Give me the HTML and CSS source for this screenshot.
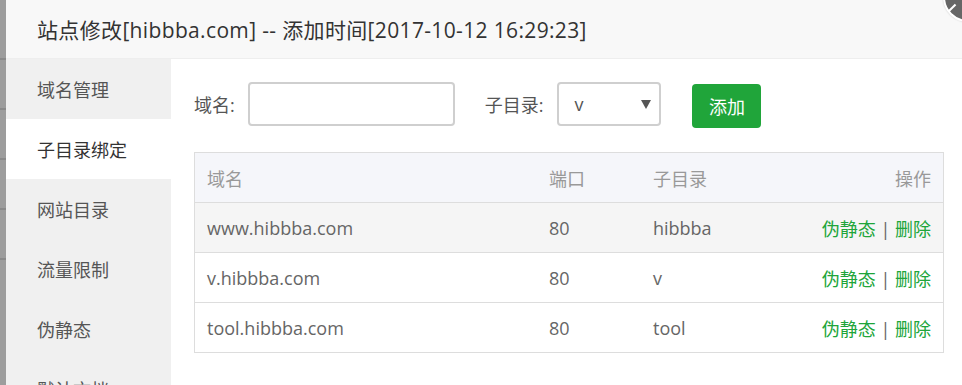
FILE: index.html
```html
<!DOCTYPE html>
<html lang="zh-CN">
<head>
    <meta charset="UTF-8">
    <title>站点修改</title>
    <link rel="stylesheet" href="styles.css">
</head>
<body>

<div class="page">
    <div class="backdrop">
        <span class="bd-row"></span>
        <span class="bd-row"></span>
        <span class="bd-row"></span>
        <span class="bd-row"></span>
        <span class="bd-row"></span>
    </div>

    <div class="dialog">
        <div class="dialog-title">站点修改[hibbba.com] -- 添加时间[2017-10-12 16:29:23]</div>
        <span class="dialog-close"></span>

        <div class="dialog-body">
            <ul class="side-menu">
                <li>域名管理</li>
                <li class="active">子目录绑定</li>
                <li>网站目录</li>
                <li>流量限制</li>
                <li>伪静态</li>
                <li>默认文档</li>
            </ul>

            <div class="panel">
                <div class="form-row">
                    <label class="form-label">域名:</label>
                    <input class="form-input" type="text">
                    <label class="form-label sub-label">子目录:</label>
                    <span class="select-wrap">
                        <select class="form-select">
                            <option>v</option>
                            <option>hibbba</option>
                            <option>tool</option>
                        </select>
                    </span>
                    <button class="btn-add">添加</button>
                </div>

                <table class="bind-table">
                    <thead>
                        <tr>
                            <th class="col-domain">域名</th>
                            <th class="col-port">端口</th>
                            <th>子目录</th>
                            <th class="col-op">操作</th>
                        </tr>
                    </thead>
                    <tbody>
                        <tr class="hover">
                            <td>www.hibbba.com</td>
                            <td>80</td>
                            <td>hibbba</td>
                            <td class="col-op"><a>伪静态</a> | <a>删除</a></td>
                        </tr>
                        <tr>
                            <td>v.hibbba.com</td>
                            <td>80</td>
                            <td>v</td>
                            <td class="col-op"><a>伪静态</a> | <a>删除</a></td>
                        </tr>
                        <tr>
                            <td>tool.hibbba.com</td>
                            <td>80</td>
                            <td>tool</td>
                            <td class="col-op"><a>伪静态</a> | <a>删除</a></td>
                        </tr>
                    </tbody>
                </table>
            </div>
        </div>
    </div>
</div>

</body>
</html>
```

FILE: styles.css
```css
html, body {
    margin: 0;
    padding: 0;
    height: 100%;
    overflow: hidden;
}
body {
    font-family: "Open Sans", "Noto Sans CJK SC", sans-serif;
    color: #555;
    background: #fff;
}
.page {
    display: flex;
    height: 385px;
    position: relative;
}
.backdrop {
    width: 6px;
    flex: none;
    background: #9d9d9d;
    display: flex;
    flex-direction: column;
    padding-top: 58px;
    gap: 48px;
}
.bd-row {
    height: 2px;
    background: #8a8a8a;
}
.dialog {
    flex: 1;
    display: flex;
    flex-direction: column;
    background: #fff;
}
.dialog-title {
    height: 58px;
    line-height: 60px;
    padding-left: 31px;
    font-size: 21px;
    letter-spacing: 0.35px;
    color: #333;
    background: #f8f8f8;
    border-bottom: 1px solid #eee;
    flex: none;
}
.dialog-close {
    position: absolute;
    top: -28px;
    right: -31px;
    width: 46px;
    height: 46px;
    border-radius: 50%;
    background: #666;
    border: 2px solid #fff;
    box-shadow: 0 0 2px rgba(0,0,0,0.2);
}
.dialog-close::after {
    content: "";
    position: absolute;
    left: 2px;
    top: 33px;
    width: 10px;
    height: 2px;
    background: #fff;
    transform: rotate(-45deg);
}
.dialog-body {
    flex: 1;
    display: flex;
    min-height: 0;
}
.side-menu {
    list-style: none;
    margin: 0;
    padding: 0;
    width: 165px;
    flex: none;
    background: #f0f0f0;
}
.side-menu li {
    height: 60px;
    line-height: 62px;
    padding-left: 31px;
    font-size: 18px;
    color: #555;
}
.side-menu li.active {
    background: #fff;
    color: #333;
}
.panel {
    flex: 1;
    padding: 23px 17px 0 23px;
}
.form-row {
    display: flex;
    align-items: center;
    height: 44px;
}
.form-label {
    font-size: 18px;
    color: #555;
    margin-right: 13px;
}
.sub-label {
    margin-left: 30px;
    margin-right: 14px;
}
.form-input {
    width: 207px;
    height: 44px;
    box-sizing: border-box;
    border: 2px solid #cfcfcf;
    border-radius: 4px;
    outline: none;
    font-size: 16px;
}
.select-wrap {
    position: relative;
    display: inline-block;
}
.select-wrap::after {
    content: "";
    position: absolute;
    right: 10px;
    top: 18px;
    border-left: 5px solid transparent;
    border-right: 5px solid transparent;
    border-top: 9px solid #555;
}
.form-select {
    -webkit-appearance: none;
    appearance: none;
    width: 104px;
    height: 44px;
    box-sizing: border-box;
    border: 2px solid #cfcfcf;
    border-radius: 4px;
    background: #fff;
    padding-left: 15px;
    font-family: "Open Sans", "Noto Sans CJK SC", sans-serif;
    font-size: 18px;
    color: #555;
    outline: none;
}
.btn-add {
    margin-left: 31px;
    margin-top: 4px;
    width: 69px;
    height: 44px;
    border: none;
    border-radius: 4px;
    background: #20a53a;
    color: #fff;
    font-family: "Open Sans", "Noto Sans CJK SC", sans-serif;
    font-size: 18px;
}
.bind-table {
    margin-top: 26px;
    width: 750px;
    border-collapse: collapse;
    border: 1px solid #ddd;
    font-size: 18px;
    color: #666;
}
.bind-table th,
.bind-table td {
    height: 49px;
    padding: 0 12px;
    text-align: left;
    border-top: 1px solid #ddd;
    font-weight: normal;
}
.bind-table th {
    background: #f5f6fa;
    color: #999;
}
.bind-table .col-domain {
    width: 318px;
}
.bind-table .col-port {
    width: 80px;
}
.bind-table .col-op {
    text-align: right;
}
.bind-table tr.hover td {
    background: #f5f5f5;
}
.bind-table a {
    color: #20a53a;
    cursor: pointer;
}
```
